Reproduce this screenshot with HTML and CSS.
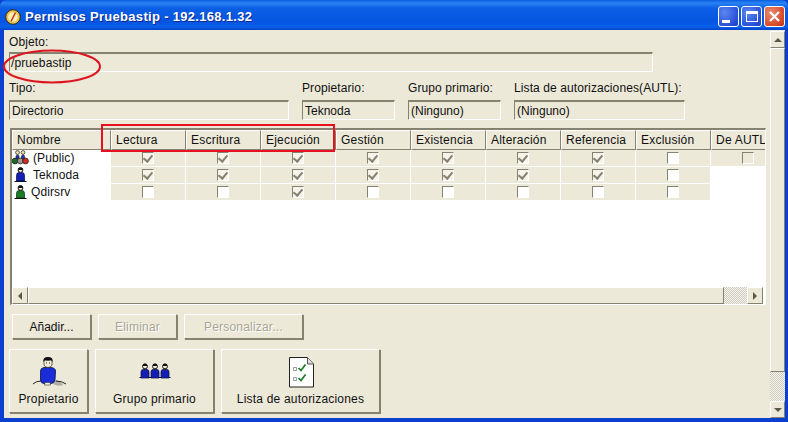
FILE: index.html
```html
<!DOCTYPE html>
<html lang="es">
<head>
<meta charset="utf-8">
<title>Permisos Pruebastip</title>
<link rel="stylesheet" href="styles.css">
</head>
<body>
<div class="window">
  <header class="titlebar">
    <svg class="app-icon" width="16" height="16" viewBox="0 0 16 16"><circle cx="8" cy="8" r="7.300" fill="#e8c24a" stroke="#2e2a18"/><circle cx="8" cy="8" r="4.800" fill="#fbeeb0"/><path d="M10.500 3.500 6 12.500" stroke="#c0301c" stroke-width="1.600"/></svg>
    <span class="title">Permisos Pruebastip - 192.168.1.32</span>
    <div class="caption-buttons">
      <span class="cap cap-min"><i></i></span>
      <span class="cap cap-max"><i></i></span>
      <span class="cap cap-close"><svg width="15" height="15" viewBox="0 0 15 15"><path d="M3 3 12 12M12 3 3 12" stroke="#fff" stroke-width="2.200"/></svg></span>
    </div>
  </header>
  <div class="client">
    <main class="main">
      <div class="lbl">Objeto:</div>
      <div class="field f-object">/pruebastip</div>
      <div class="meta">
        <div class="col c-tipo"><div class="lbl">Tipo:</div><div class="field">Directorio</div></div>
        <div class="col c-prop"><div class="lbl">Propietario:</div><div class="field">Teknoda</div></div>
        <div class="col c-prop"><div class="lbl">Grupo primario:</div><div class="field">(Ninguno)</div></div>
        <div class="col c-autl"><div class="lbl">Lista de autorizaciones(AUTL):</div><div class="field">(Ninguno)</div></div>
      </div>
      <section class="table">
        <div class="grid head">
          <div>Nombre</div><div>Lectura</div><div>Escritura</div><div>Ejecución</div><div>Gestión</div><div>Existencia</div><div>Alteración</div><div>Referencia</div><div>Exclusión</div><div>De AUTL</div>
        </div>
        <div class="rows">
          <div class="grid row">
            <div class="name"><svg width="18" height="16" viewBox="0 0 18 16"><g stroke="#1a1a1a" stroke-width=".7"><circle cx="5.500" cy="2.500" r="1.900" fill="#f2e6a8"/><circle cx="11" cy="2.500" r="1.900" fill="#f2e6a8"/><path d="M4 9V6.500Q4 5 5.500 5T7 6.500V9ZM9.500 9V6.500Q9.500 5 11 5T12.500 6.500V9Z" fill="#2233c0"/><circle cx="3" cy="11" r="2.900" fill="#1d6b2a"/><circle cx="8.300" cy="11" r="2.900" fill="#9a9a9a"/><circle cx="13.500" cy="11" r="2.900" fill="#d02a22"/></g></svg><span>(Public)</span></div>
            <div class="c"><i class="cb on"></i></div><div class="c"><i class="cb on"></i></div><div class="c"><i class="cb on"></i></div><div class="c"><i class="cb on"></i></div><div class="c"><i class="cb on"></i></div><div class="c"><i class="cb on"></i></div><div class="c"><i class="cb on"></i></div><div class="c"><i class="cb"></i></div><div class="c"><i class="cb off"></i></div>
          </div>
          <div class="grid row">
            <div class="name"><svg width="18" height="16" viewBox="0 0 18 16"><path d="M2.500 14.500h12" stroke="#111"/><path d="M4.500 14V8.500Q4.500 5.500 7 5.500h3Q12.500 5.500 12.500 8.500V14Z" fill="#1420b4" stroke="#05083a" stroke-width=".7"/><circle cx="8.500" cy="3" r="2.400" fill="#f4ead8" stroke="#111"/><path d="M6.100 3a2.400 2.400 0 0 1 4.800 0Z" fill="#111"/></svg><span>Teknoda</span></div>
            <div class="c"><i class="cb on"></i></div><div class="c"><i class="cb on"></i></div><div class="c"><i class="cb on"></i></div><div class="c"><i class="cb on"></i></div><div class="c"><i class="cb on"></i></div><div class="c"><i class="cb on"></i></div><div class="c"><i class="cb on"></i></div><div class="c"><i class="cb"></i></div><div class="blank"></div>
          </div>
          <div class="grid row">
            <div class="name"><svg width="18" height="16" viewBox="0 0 18 16"><path d="M4.500 14V9.500Q4.500 6.500 7 6.500h3Q12.500 6.500 12.500 9.500V14Z" fill="#1a7a25" stroke="#06300a" stroke-width=".7"/><path d="M2.500 14.500h12" stroke="#111"/><circle cx="8.500" cy="4" r="2.400" fill="#f4ead8" stroke="#111"/><path d="M6.100 4a2.400 2.400 0 0 1 4.800 0Z" fill="#111"/></svg><span class="n-qdi">Qdirsrv</span></div>
            <div class="c"><i class="cb"></i></div><div class="c"><i class="cb"></i></div><div class="c"><i class="cb on"></i></div><div class="c"><i class="cb"></i></div><div class="c"><i class="cb"></i></div><div class="c"><i class="cb"></i></div><div class="c"><i class="cb"></i></div><div class="c"><i class="cb"></i></div><div class="blank"></div>
          </div>
        </div>
        <div class="hscroll">
          <span class="sbtn"><b class="arr left"></b></span>
          <span class="hthumb"></span>
          <span class="hatch"></span>
          <span class="sbtn"><b class="arr right"></b></span>
        </div>
      </section>
      <div class="actions">
        <button class="btn b80 tight">Añadir...</button>
        <button class="btn b80 dis">Eliminar</button>
        <button class="btn b120 dis">Personalizar...</button>
      </div>
      <div class="big-actions">
        <button class="btn big b80">
          <svg width="36" height="36" viewBox="0 0 36 36"><path d="M24 26Q30 27 32 31Q27 33 22 30Z" fill="#b0aea2"/><path d="M2 30Q5 27 10 27M35 30Q31 27 25 27" fill="none" stroke="#222"/><path d="M9.500 17Q9.500 14 13 13.500h7Q24.500 14 24.500 17L24 26Q23 29.500 20 29.500h-7Q10 29.500 9.500 26Z" fill="#1a2cd8" stroke="#0b1040" stroke-width=".8"/><path d="M14 28.500h5l.5 2.500h-6Z" fill="#f4f0e0" stroke="#333" stroke-width=".6"/><path d="M13 6h8v5Q20 13.500 17 13.500T13 11Z" fill="#f4ead8" stroke="#222" stroke-width=".7"/><path d="M12.500 8Q11.500 3 17 3T21.500 8L20 6Q16 7 14 6Z" fill="#111"/><path d="M15 9h1M18 9h1" stroke="#333"/></svg>
          <span>Propietario</span>
        </button>
        <button class="btn big b120">
          <svg width="36" height="36" viewBox="0 0 36 36"><path d="M2.500 23.500h31" stroke="#111"/><path d="M4 24V18Q4 15.500 6 15.500h4Q12 15.500 12 18v6ZM14 24V18Q14 15.500 16 15.500h4Q22 15.500 22 18v6ZM24 24V18Q24 15.500 26 15.500h4Q32 15.500 32 18v6Z" fill="#1420b4" stroke="#05083a" stroke-width=".7"/><g fill="#f4ead8" stroke="#111"><circle cx="8" cy="12.500" r="2.400"/><circle cx="18" cy="12.500" r="2.400"/><circle cx="28" cy="12.500" r="2.400"/></g><path d="M5.600 12a2.400 2.400 0 0 1 4.800 0ZM15.600 12a2.400 2.400 0 0 1 4.800 0ZM25.600 12a2.400 2.400 0 0 1 4.800 0Z" fill="#111"/></svg>
          <span>Grupo primario</span>
        </button>
        <button class="btn big b160">
          <svg width="36" height="36" viewBox="0 0 36 36"><path d="M6.500 3.500h18l6 6.500v23h-24Z" fill="#fff" stroke="#222"/><path d="M24.500 3.500v6.500h6" fill="#ddd" stroke="#555"/><path d="M10.500 13.500h3v3h-3ZM10.500 23.500h3v3h-3Z" fill="none" stroke="#999"/><path d="M15.500 14l2.500 2.500 4.500-6M15.500 24l2.500 2.500 4.500-6" fill="none" stroke="#157a28" stroke-width="1.700"/></svg>
          <span>Lista de autorizaciones</span>
        </button>
      </div>
    </main>
    <aside class="vscroll">
      <span class="sbtn tall"><b class="arr up"></b></span>
      <span class="vthumb"></span>
      <span class="hatch"></span>
      <span class="sbtn tall"><b class="arr down"></b></span>
    </aside>
  </div>
  <svg class="mark-ellipse" width="100" height="36" viewBox="0 0 100 36"><ellipse cx="50" cy="17.500" rx="48" ry="16" fill="none" stroke="#dc1420" stroke-width="2"/></svg>
  <div class="mark-rect"></div>
</div>
</body>
</html>
```
FILE: styles.css
```css
* { box-sizing: border-box; }
html, body { margin: 0; padding: 0; }
body { width: 788px; height: 422px; overflow: hidden; font: 12px/14px "Liberation Sans", Arial, sans-serif; color: #111; }
.window { position: relative; width: 788px; height: 422px; background: #0a3fd0; display: flex; flex-direction: column; padding: 0 3px 4px 4px; }

.titlebar { height: 30px; margin: 0 -3px 0 -4px; flex: none; display: flex; align-items: center; padding: 3px 3px 0 5px; gap: 4px;
  background: linear-gradient(#0a5ce0 0, #2a84f4 3px, #0b5fe4 8px, #0554e2 22px, #0a60ea 27px, #0040c8 30px); border-radius: 6px 6px 0 0; }
.app-icon { flex: none; }
.title { color: #fff; font: bold 13px/16px "Liberation Sans", Arial, sans-serif; letter-spacing: .31px; text-shadow: 1px 1px #0a2a90; flex: 1; }
.caption-buttons { display: flex; gap: 2px; }
.cap { position: relative; width: 21px; height: 21px; border: 1px solid #fff; border-radius: 3px; background: radial-gradient(circle at 30% 30%, #5a88f0, #2a50d8 70%, #1a3cc0); display: flex; align-items: center; justify-content: center; }
.cap-close { background: radial-gradient(circle at 30% 30%, #e88a70, #d84a28 70%, #b83418); }
.cap-min i { width: 8px; height: 3px; background: #fff; margin: 9px 5px 0 0; }
.cap-max i { width: 12px; height: 11px; border: 1px solid #fff; border-top-width: 3px; }

.client { flex: 1; min-height: 0; background: #ece9d8; display: flex; }
.main { flex: 1; min-width: 0; padding: 5px 5px 0 5px; }
.lbl { height: 14px; line-height: 14px; letter-spacing: .1px; white-space: nowrap; }
.field { height: 20px; margin-top: 5px; padding: 2px 0 0 2px; border: 1px solid; border-color: #85826f #fff #fff #85826f; border-top-width: 2px; line-height: 15px; }
.f-object { width: 644px; margin-top: 3px; padding-left: 1px; letter-spacing: .1px; }
.meta { display: flex; gap: 13px; margin-top: 9px; }
.c-tipo { width: 280px; }
.c-prop { width: 93px; }
.c-autl { width: 171px; }

.table { width: 756px; height: 177px; margin: 8px 0 0 1px; border: 1px solid; border-color: #85826f #fff #fff #85826f; border-top-width: 2px; border-left-width: 2px; background: #fff; display: flex; flex-direction: column; overflow: hidden; }
.grid { display: grid; grid-template-columns: 99px repeat(9, 75px); }
.head { height: 20px; flex: none; }
.head > div { background: #ece9d8; border: 1px solid; border-color: #fff #85826f #85826f #fff; padding: 2px 0 0 4px; letter-spacing: .22px; white-space: nowrap; overflow: hidden; }
.rows { flex: 1; min-height: 0; }
.row { height: 17px; }
.row > div { height: 17px; border-right: 1px solid #fff; border-bottom: 1px solid #fff; }
.row .name { background: #fff; display: flex; align-items: center; gap: 3px; letter-spacing: .1px; white-space: nowrap; }
.row .c { background: #ece9d8; display: flex; align-items: center; justify-content: center; }
.row .blank { background: #fff; }
.n-qdi { margin-left: -2px; }
.cb { position: relative; display: block; width: 12px; height: 12px; border: 1px solid; border-color: #85826f #fff #fff #85826f; background: #fff; }
.cb.off { background: #ece9d8; }
.cb.on { background: #f6f4ea; }
.cb.on::after { content: ""; position: absolute; left: 2px; top: 0; width: 4px; height: 7px; border: solid #85826f; border-width: 0 2px 2px 0; transform: rotate(40deg); }

.hscroll { height: 17px; width: 751px; flex: none; display: flex; }
.hthumb { flex: 1; border: 1px solid; border-color: #fff #85826f #85826f #fff; background: #ece9d8; }
.hatch { background-image: conic-gradient(#f6f5ee 25%, #cdcbc0 0 50%, #f6f5ee 0 75%, #cdcbc0 0); background-size: 2px 2px; }
.hscroll .hatch { width: 23px; }
.sbtn { position: relative; flex: none; width: 16px; height: 17px; background: #ece9d8; border: 1px solid; border-color: #fff #85826f #85826f #fff; display: flex; align-items: center; justify-content: center; }
.arr { width: 0; height: 0; border: 4px solid transparent; }
.arr.left { border-left: 0; border-right-color: #5b5848; }
.arr.right { border-right: 0; border-left-color: #5b5848; }
.arr.up { border-top: 0; border-bottom-color: #5b5848; }
.arr.down { border-bottom: 0; border-top-color: #5b5848; }

.actions { display: flex; gap: 7px; margin: 9px 0 0 3px; }
.big-actions { display: flex; gap: 7px; margin-top: 10px; }
.btn { height: 25px; background: #ece9d8; border: 1px solid; border-color: #fff #85826f #85826f #fff; box-shadow: 1px 1px 0 #85826f; font: 12px/14px "Liberation Sans", Arial, sans-serif; letter-spacing: .2px; color: #111; padding: 0; }
.tight { letter-spacing: 0; }
.b80 { width: 79px; }
.b120 { width: 119px; }
.b160 { width: 159px; }
.dis { color: #a8a595; text-shadow: 1px 1px #fff; }
.big { height: 64px; display: flex; flex-direction: column; align-items: center; padding-top: 4px; }
.big svg { display: block; margin-bottom: 2px; }

.vscroll { flex: none; width: 15px; display: flex; flex-direction: column; padding-top: 1px; }
.vscroll .sbtn.tall { width: 15px; height: 17px; }
.vthumb { flex: none; height: 324px; background: #ece9d8; border: 1px solid; border-color: #fff #85826f #85826f #fff; }
.vscroll .hatch { flex: 1; }

.mark-ellipse { position: absolute; left: 2px; top: 49px; }
.mark-rect { position: absolute; left: 101px; top: 124px; width: 234px; height: 28px; border: 2px solid #e8101e; }
```
